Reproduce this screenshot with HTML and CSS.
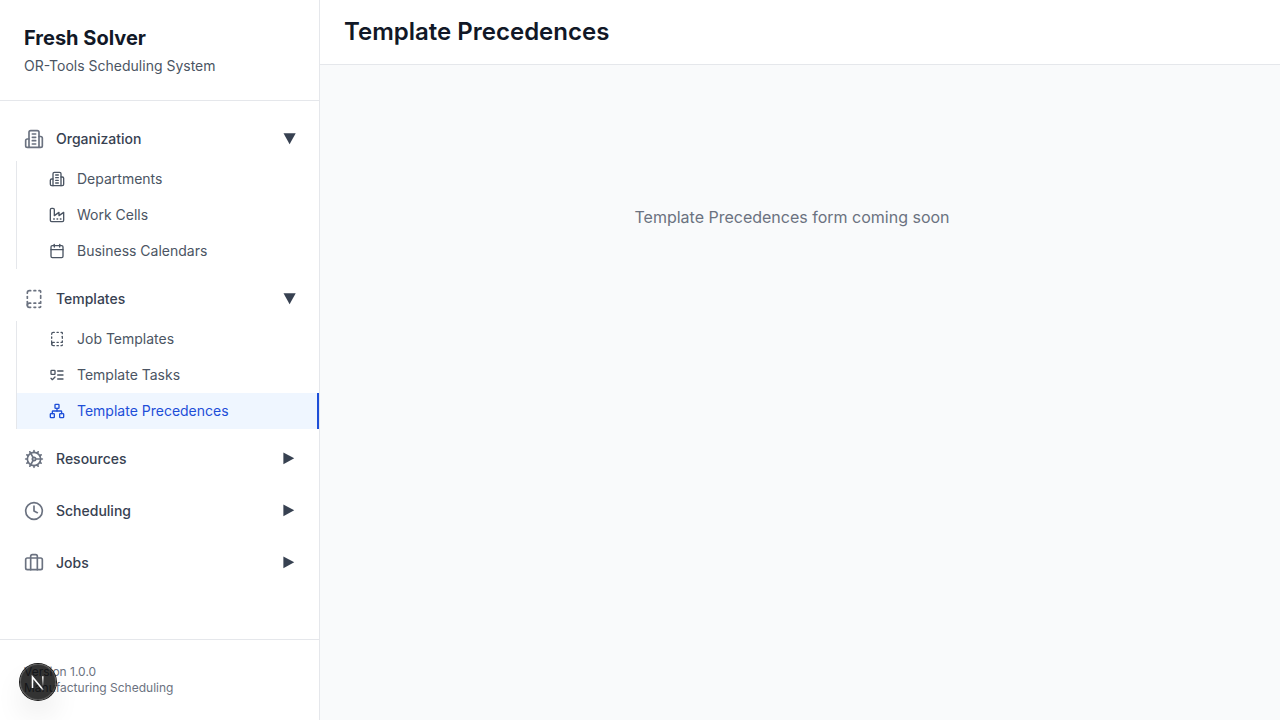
FILE: index.html
```html
<!DOCTYPE html>
<html lang="en">
<head>
<meta charset="utf-8">
<title>Fresh Solver</title>
<link rel="stylesheet" href="styles.css">
</head>
<body>
<svg class="defs" aria-hidden="true">
  <symbol id="building" viewBox="0 0 24 24"><path d="M6 22V4a2 2 0 0 1 2-2h8a2 2 0 0 1 2 2v18Z"/><path d="M6 12H4a2 2 0 0 0-2 2v6a2 2 0 0 0 2 2h2"/><path d="M18 9h2a2 2 0 0 1 2 2v9a2 2 0 0 1-2 2h-2"/><path d="M10 6h4"/><path d="M10 10h4"/><path d="M10 14h4"/><path d="M10 18h4"/></symbol>
  <symbol id="factory" viewBox="0 0 24 24"><path d="M2 20a2 2 0 0 0 2 2h16a2 2 0 0 0 2-2V8l-7 5V8l-7 5V4a2 2 0 0 0-2-2H4a2 2 0 0 0-2 2Z"/><path d="M17 18h1"/><path d="M12 18h1"/><path d="M7 18h1"/></symbol>
  <symbol id="calendar" viewBox="0 0 24 24"><path d="M8 2v4"/><path d="M16 2v4"/><rect width="18" height="18" x="3" y="4" rx="2"/><path d="M3 10h18"/></symbol>
  <symbol id="book" viewBox="0 0 24 24"><path d="M12 17h2"/><path d="M12 22h2"/><path d="M12 2h2"/><path d="M18 22h1a1 1 0 0 0 1-1"/><path d="M18 2h1a1 1 0 0 1 1 1v1"/><path d="M20 15v2h-2"/><path d="M20 8v3"/><path d="M4 11V9"/><path d="M4 19.5V15"/><path d="M4 5v-.5A2.5 2.5 0 0 1 6.5 2H8"/><path d="M8 22H6.5a1 1 0 0 1 0-5H8"/></symbol>
  <symbol id="tasks" viewBox="0 0 24 24"><rect x="3" y="5" width="6" height="6" rx="1"/><path d="m3 17 2 2 4-4"/><path d="M13 6h8"/><path d="M13 12h8"/><path d="M13 18h8"/></symbol>
  <symbol id="network" viewBox="0 0 24 24"><rect x="16" y="16" width="6" height="6" rx="1"/><rect x="2" y="16" width="6" height="6" rx="1"/><rect x="9" y="2" width="6" height="6" rx="1"/><path d="M5 16v-3a1 1 0 0 1 1-1h12a1 1 0 0 1 1 1v3"/><path d="M12 12V8"/></symbol>
  <symbol id="cog" viewBox="0 0 24 24"><path d="M12 20a8 8 0 1 0 0-16 8 8 0 0 0 0 16Z"/><path d="M12 14a2 2 0 1 0 0-4 2 2 0 0 0 0 4Z"/><path d="M12 2v2"/><path d="M12 22v-2"/><path d="m17 20.66-1-1.73"/><path d="M11 10.27 7 3.34"/><path d="m20.66 17-1.73-1"/><path d="m3.34 7 1.73 1"/><path d="M14 12h8"/><path d="M2 12h2"/><path d="m20.66 7-1.73 1"/><path d="m3.34 17 1.73-1"/><path d="m17 3.34-1 1.73"/><path d="m11 13.73-4 6.93"/></symbol>
  <symbol id="clock" viewBox="0 0 24 24"><circle cx="12" cy="12" r="10"/><path d="M12 6v6l4 2"/></symbol>
  <symbol id="briefcase" viewBox="0 0 24 24"><path d="M16 20V4a2 2 0 0 0-2-2h-4a2 2 0 0 0-2 2v16"/><rect width="20" height="14" x="2" y="6" rx="2"/></symbol>
  <symbol id="open" viewBox="0 0 14 14"><path d="M1.5 1.2h12.2L7.6 12.2Z"/></symbol>
  <symbol id="closed" viewBox="0 0 14 14"><path d="M1.4.4 12.2 6.3 1.4 12.2Z"/></symbol>
</svg>
<div class="app">
  <aside class="sidebar">
    <header class="brand">
      <h1 class="brand-name">Fresh Solver</h1>
      <p class="brand-sub">OR-Tools Scheduling System</p>
    </header>
    <nav class="nav">
      <section class="group">
        <div class="group-head"><svg class="icon"><use href="#building"/></svg><span class="label">Organization</span><svg class="arrow"><use href="#open"/></svg></div>
        <div class="items">
          <a class="item"><svg class="icon"><use href="#building"/></svg>Departments</a>
          <a class="item"><svg class="icon"><use href="#factory"/></svg>Work Cells</a>
          <a class="item"><svg class="icon"><use href="#calendar"/></svg>Business Calendars</a>
        </div>
      </section>
      <section class="group">
        <div class="group-head"><svg class="icon"><use href="#book"/></svg><span class="label">Templates</span><svg class="arrow"><use href="#open"/></svg></div>
        <div class="items">
          <a class="item"><svg class="icon"><use href="#book"/></svg>Job Templates</a>
          <a class="item"><svg class="icon"><use href="#tasks"/></svg>Template Tasks</a>
          <a class="item active"><svg class="icon"><use href="#network"/></svg>Template Precedences</a>
        </div>
      </section>
      <section class="group">
        <div class="group-head"><svg class="icon"><use href="#cog"/></svg><span class="label">Resources</span><svg class="arrow"><use href="#closed"/></svg></div>
      </section>
      <section class="group">
        <div class="group-head"><svg class="icon"><use href="#clock"/></svg><span class="label">Scheduling</span><svg class="arrow"><use href="#closed"/></svg></div>
      </section>
      <section class="group">
        <div class="group-head"><svg class="icon"><use href="#briefcase"/></svg><span class="label">Jobs</span><svg class="arrow"><use href="#closed"/></svg></div>
      </section>
    </nav>
    <footer class="footer">
      <div>Version 1.0.0</div>
      <div>Manufacturing Scheduling</div>
    </footer>
  </aside>
  <main class="main">
    <header class="topbar"><h2 class="title">Template Precedences</h2></header>
    <div class="content"><p class="notice">Template Precedences form coming soon</p></div>
  </main>
</div>
<div class="badge">
  <svg class="badge-mark" viewBox="0 0 36 36" fill="none">
    <defs>
      <linearGradient id="fade-a" gradientUnits="userSpaceOnUse" x1="17" y1="17" x2="25" y2="27"><stop stop-color="#fff"/><stop offset=".6" stop-color="#fff"/><stop offset="1" stop-color="#fff" stop-opacity="0"/></linearGradient>
      <linearGradient id="fade-b" gradientUnits="userSpaceOnUse" x1="23" y1="12" x2="23" y2="23"><stop stop-color="#fff"/><stop offset="1" stop-color="#fff" stop-opacity="0"/></linearGradient>
    </defs>
    <path d="M12.5 24V13L23.2 26" stroke="url(#fade-a)" stroke-width="1.6"/>
    <path d="M22.8 12.2v11.6" stroke="url(#fade-b)" stroke-width="1.6"/>
  </svg>
</div>
</body>
</html>
```
FILE: styles.css
```css
* { box-sizing: border-box; margin: 0; padding: 0; }
body { font-family: Inter, "Liberation Sans", sans-serif; font-size: 16px; line-height: 24px; color: #111827; overflow: hidden; }
.defs { display: none; }
.app { display: flex; height: 100vh; background: #f9fafb; }
.sidebar { display: flex; flex-direction: column; width: 320px; background: #fff; border-right: 1px solid #e5e7eb; }
.brand { padding: 24px; border-bottom: 1px solid #e5e7eb; }
.brand-name { font-size: 20px; line-height: 28px; font-weight: 700; }
.brand-sub { margin-top: 4px; font-size: 14px; line-height: 20px; color: #4b5563; }
.nav { flex: 1; padding: 16px 0; }
.group { margin-bottom: 8px; }
.group-head { display: flex; align-items: center; gap: 12px; padding: 12px 24px; font-size: 14px; line-height: 20px; font-weight: 500; color: #374151; }
.label { flex: 1; }
.icon { flex: none; width: 20px; height: 20px; fill: none; stroke: #6b7280; stroke-width: 2; stroke-linecap: round; stroke-linejoin: round; }
.arrow { width: 14px; height: 14px; margin-right: -1px; fill: #374151; }
.items { margin-left: 16px; border-left: 1px solid #e5e7eb; }
.item { display: flex; align-items: center; gap: 12px; padding: 8px 24px 8px 32px; font-size: 14px; line-height: 20px; color: #4b5563; }
.item .icon { width: 16px; height: 16px; stroke: currentColor; }
.item.active { color: #1d4ed8; background: #eff6ff; border-right: 2px solid #1d4ed8; }
.footer { padding: 24px; border-top: 1px solid #e5e7eb; font-size: 12px; line-height: 16px; color: #6b7280; }
.main { flex: 1; display: flex; flex-direction: column; }
.topbar { padding: 16px 24px; background: #fff; border-bottom: 1px solid #e5e7eb; }
.title { font-size: 24px; line-height: 32px; font-weight: 600; }
.content { display: flex; align-items: center; justify-content: center; height: 304px; padding: 24px 40px 24px 24px; }
.notice { color: #6b7280; }
.badge { position: absolute; left: 20px; top: 664px; width: 36px; height: 36px; border-radius: 50%; background: rgba(0, 0, 0, .8); box-shadow: 0 0 0 1px #171717, inset 0 0 0 1px rgba(255, 255, 255, .14), 0 16px 32px -8px rgba(0, 0, 0, .24); }
.badge-mark { display: block; width: 36px; height: 36px; }
```
